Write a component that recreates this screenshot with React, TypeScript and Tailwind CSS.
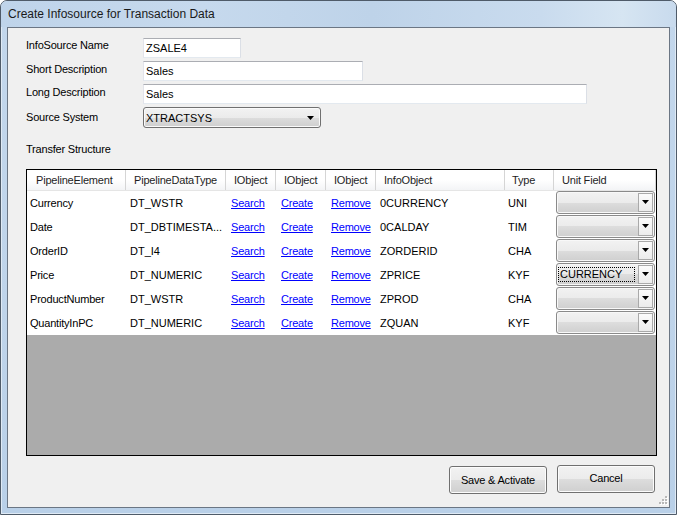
import React from "react";

const rows = [
  { el: "Currency", dt: "DT_WSTR", io: "0CURRENCY", type: "UNI", unit: "" },
  { el: "Date", dt: "DT_DBTIMESTA...", io: "0CALDAY", type: "TIM", unit: "" },
  { el: "OrderID", dt: "DT_I4", io: "ZORDERID", type: "CHA", unit: "" },
  { el: "Price", dt: "DT_NUMERIC", io: "ZPRICE", type: "KYF", unit: "CURRENCY" },
  { el: "ProductNumber", dt: "DT_WSTR", io: "ZPROD", type: "CHA", unit: "" },
  { el: "QuantityInPC", dt: "DT_NUMERIC", io: "ZQUAN", type: "KYF", unit: "" },
];

function Tri() {
  return (
    <svg width="7" height="4" viewBox="0 0 7 4">
      <polygon points="0,0 7,0 3.5,4" fill="#000" />
    </svg>
  );
}

function Row({ label, children, pt = "pt-[1px]" }: { label: string; children: React.ReactNode; pt?: string }) {
  return (
    <div className="flex">
      <div className={`w-[117px] leading-[14px] tracking-[-0.2px] ${pt}`}>{label}</div>
      {children}
    </div>
  );
}

function TextBox({ w, value }: { w: string; value: string }) {
  return (
    <div
      className={`${w} h-[20px] border border-[#abadb3] border-l-[#e2e3ea] border-r-[#dbdfe6] border-b-[#e3e9ef] bg-white pl-[2px] leading-[18px]`}
    >
      {value}
    </div>
  );
}

const btnBg =
  "bg-[linear-gradient(to_bottom,#f2f2f2_0%,#ebebeb_50%,#dddddd_50%,#cfcfcf_100%)]";

export default function App() {
  return (
    <div className="w-[677px] h-[515px] font-['Liberation_Sans',Arial,sans-serif] text-[11px] text-black">
      <div className="w-[677px] h-[515px] flex flex-col rounded-t-[7px] border border-[#4f5b69] bg-[linear-gradient(to_bottom,#c3d7ec,#bfd4ea_60%,#b9d0e8_100%)] shadow-[inset_0_0_0_1px_#dfeaf5]">
        {/* Title bar */}
        <div className="h-[26px] flex items-center pl-[7px] pb-[1px] rounded-t-[6px] bg-[linear-gradient(to_right,#bfd4ea_0%,#c6d9ed_30%,#bed3e9_55%,#c9dbee_80%,#d6e5f2_92%,#c8daed_100%)]">
          <span className="text-[12px] leading-[14px] text-[#1a1a1a]">Create Infosource for Transaction Data</span>
        </div>
        {/* Client */}
        <div className="flex-1 flex px-[6px] pb-[6px]">
          <div className="relative flex-1 flex flex-col border border-[#6b7684] bg-[#f0f0f0]">
            <div className="ml-[18px] mt-[10px] flex flex-col gap-[3px]">
              <Row label="InfoSource Name" pt="pt-0">
                <TextBox w="w-[98px]" value="ZSALE4" />
              </Row>
              <Row label="Short Description">
                <TextBox w="w-[220px]" value="Sales" />
              </Row>
              <Row label="Long Description">
                <TextBox w="w-[444px]" value="Sales" />
              </Row>
              <Row label="Source System" pt="pt-[3px]">
                <div
                  className={`w-[178px] h-[21px] rounded-[3px] border border-[#707070] ${btnBg} shadow-[inset_0_0_0_1px_#fafafa] flex items-center justify-between pl-[2px] pr-[6px]`}
                >
                  <span className="leading-[14px]">XTRACTSYS</span>
                  <Tri />
                </div>
              </Row>
            </div>
            <div className="ml-[18px] mt-[14px] leading-[14px] tracking-[-0.2px]">Transfer Structure</div>

            {/* Grid */}
            <div className="ml-[18px] mt-[13px] w-[631px] h-[287px] border border-black bg-[#ababab] flex flex-col">
              <div className="h-[21px] grid grid-cols-[99px_100px_50px_50px_50px_129px_49px_102px] bg-[linear-gradient(to_bottom,#ffffff_0%,#ffffff_50%,#f3f4f6_100%)] border-b border-[#e5e5e5]">
                {["PipelineElement", "PipelineDataType", "IObject", "IObject", "IObject", "InfoObject", "Type", "Unit Field"].map(
                  (h, i) => (
                    <div
                      key={i}
                      className={`h-full flex items-center ${i === 0 ? "pl-[9px]" : i === 6 ? "pl-[7px]" : "pl-[8px]"} border-r border-[#d5d5d5] tracking-[-0.2px] text-[#1e1e1e] whitespace-nowrap overflow-hidden`}
                    >
                      {h}
                    </div>
                  )
                )}
              </div>
              <div className="bg-white flex flex-col">
                {rows.map((r, i) => (
                  <div key={i} className="h-[24px] grid grid-cols-[99px_100px_50px_50px_50px_129px_49px_102px] items-center">
                    <div className="pl-[3px] tracking-[-0.2px] whitespace-nowrap">{r.el}</div>
                    <div className="pl-[4px] whitespace-nowrap overflow-hidden">{r.dt}</div>
                    <div className="pl-[5px]">
                      <span className="text-[#0000ff] underline tracking-[-0.2px]">Search</span>
                    </div>
                    <div className="pl-[5px]">
                      <span className="text-[#0000ff] underline tracking-[-0.2px]">Create</span>
                    </div>
                    <div className="pl-[5px]">
                      <span className="text-[#0000ff] underline tracking-[-0.2px]">Remove</span>
                    </div>
                    <div className="pl-[4px]">{r.io}</div>
                    <div className="pl-[3px]">{r.type}</div>
                    <div className="h-full pl-[2px] pr-[1px] pb-[1px] -mt-[1px]">
                      <div
                        className={`h-[23px] rounded-[3px] border border-[#8a8a8a] ${btnBg} shadow-[inset_0_0_0_1px_#f8f8f8] flex items-stretch`}
                      >
                        <div className="flex-1 flex items-center pl-[1px]">
                          {r.unit && (
                            <span className="border border-dotted border-black leading-[13px] pl-[1px] pr-[6px] w-[77px]">
                              {r.unit}
                            </span>
                          )}
                        </div>
                        <div className="w-[15px] my-[1px] mr-[1px] border border-[#a9a9a9] bg-[linear-gradient(to_bottom,#fbfbfb,#ececec)] flex items-center justify-center">
                          <Tri />
                        </div>
                      </div>
                    </div>
                  </div>
                ))}
              </div>
            </div>

            {/* Buttons */}
            <div className="mt-[9px] flex justify-end items-start gap-[10px] pr-[14px]">
              <div
                className={`mt-[1px] w-[98px] h-[28px] rounded-[3px] border border-[#707070] ${btnBg} shadow-[inset_0_0_0_1px_#fcfcfc] flex items-center justify-center tracking-[-0.2px]`}
              >
                Save &amp; Activate
              </div>
              <div
                className={`w-[98px] h-[28px] rounded-[3px] border border-[#707070] ${btnBg} shadow-[inset_0_0_0_1px_#fcfcfc] flex items-center justify-center pb-[2px] tracking-[-0.2px]`}
              >
                Cancel
              </div>
            </div>

            {/* Resize grip */}
            <svg className="absolute right-[1px] bottom-[2px]" width="9" height="9" viewBox="0 0 9 9">
              {[
                [6, 0],
                [3, 3],
                [6, 3],
                [0, 6],
                [3, 6],
                [6, 6],
              ].map(([x, y], i) => (
                <g key={i}>
                  <rect x={x + 1} y={y + 1} width="2" height="2" fill="#ffffff" />
                  <rect x={x} y={y} width="2" height="2" fill="#b8b8b8" />
                </g>
              ))}
            </svg>
          </div>
        </div>
      </div>
    </div>
  );
}
